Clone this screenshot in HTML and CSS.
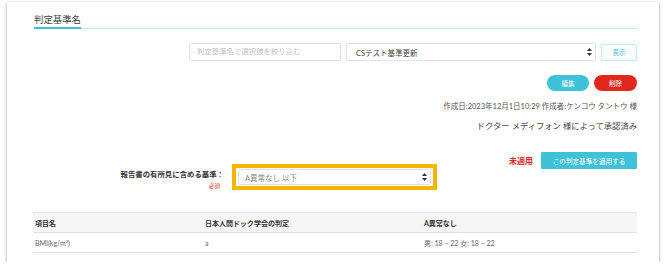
FILE: index.html
```html
<!DOCTYPE html>
<html lang="ja">
<head>
    <meta charset="UTF-8">
    <meta name="viewport" content="width=device-width, initial-scale=1.0">
    <title>判定基準名</title>
    <link rel="stylesheet" href="styles.css">
</head>
<body>
    <div class="card">
        <h2 class="section-title"><span>判定基準名</span></h2>

        <div class="filter-row">
            <div class="filter-input">判定基準名で選択肢を絞り込む</div>
            <div class="select-box wide">
                <span class="select-text">CSテスト基準更新</span>
                <svg class="arrows" width="5" height="8" viewBox="0 0 5 8"><path d="M2.5 0L5 3H0z M2.5 8L0 5h5z" fill="#333"/></svg>
            </div>
            <button class="outline-button">表示</button>
        </div>

        <div class="action-row">
            <button class="pill-button edit">編集</button>
            <button class="pill-button delete">削除</button>
        </div>

        <p class="meta">作成日:2023年12月1日10:29 作成者:ケンコウ タントウ 様</p>
        <p class="approved">ドクター メディフォン 様によって承認済み</p>

        <div class="criteria-row">
            <div class="criteria-left">
                <div class="criteria-label">
                    <span class="label-text">報告書の有所見に含める基準：</span>
                    <span class="required">必須</span>
                </div>
                <div class="highlight-frame">
                    <div class="select-box inner">
                        <span class="select-text muted">A異常なし 以下</span>
                        <svg class="arrows" width="5" height="8" viewBox="0 0 5 8"><path d="M2.5 0L5 3H0z M2.5 8L0 5h5z" fill="#333"/></svg>
                    </div>
                </div>
            </div>
            <div class="apply-block">
                <span class="status">未適用</span>
                <button class="apply-button">この判定基準を適用する</button>
            </div>
        </div>

        <table class="criteria-table">
            <thead>
                <tr>
                    <th class="col-name">項目名</th>
                    <th class="col-judge">日本人間ドック学会の判定</th>
                    <th>A異常なし</th>
                </tr>
            </thead>
            <tbody>
                <tr>
                    <td>BMI(kg/m²)</td>
                    <td>a</td>
                    <td>男: 18 ~ 22 女: 18 ~ 22</td>
                </tr>
            </tbody>
        </table>
    </div>
</body>
</html>
```

FILE: styles.css
```css
:root {
    --teal: #3fc1d9;
    --teal-light: #b8ebf3;
    --red: #e0281d;
    --yellow: #f6b500;
    --text-color: #555;
    --border-color: #e3e3e3;
}

* {
    margin: 0;
    padding: 0;
    box-sizing: border-box;
}

body {
    font-family: Lato, "Noto Sans CJK JP", sans-serif;
    background-color: #fff;
    color: var(--text-color);
}

.card {
    width: 652px;
    height: 260px;
    margin: 2px 0 0 7px;
    padding: 9px 22px 12px 27px;
    background-color: #fff;
    box-shadow: 0 1px 3px rgba(0, 0, 0, 0.4);
}

.section-title {
    font-size: 9.4px;
    font-weight: 400;
    line-height: 14px;
    color: #444;
    border-bottom: 1px solid var(--teal-light);
    padding-bottom: 1px;
    margin-top: 2px;
}

.section-title span {
    display: inline-block;
    position: relative;
}

.section-title span::after {
    content: "";
    position: absolute;
    left: 0;
    right: 0;
    bottom: -2px;
    height: 2px;
    background-color: var(--teal);
}

.filter-row {
    display: flex;
    justify-content: flex-end;
    align-items: center;
    gap: 5px;
    margin-top: 14px;
    height: 18px;
}

.filter-input {
    width: 152px;
    height: 18px;
    border: 1px solid #e2e2e2;
    border-radius: 2px;
    font-size: 7.4px;
    line-height: 16px;
    padding-left: 7px;
    color: #c4c4c4;
}

.select-box {
    display: flex;
    align-items: center;
    justify-content: space-between;
    border: 1px solid #e2e2e2;
    border-radius: 2px;
    background-color: #fff;
    padding: 0 3px 0 9px;
}

.select-box.wide {
    width: 250px;
    height: 18px;
}

.select-text {
    font-size: 7.5px;
    color: #444;
}

.select-text.muted {
    color: #888;
}

.outline-button {
    width: 36px;
    height: 17px;
    border: 1px solid var(--teal-light);
    border-radius: 2px;
    background-color: #fff;
    color: var(--teal);
    font-family: inherit;
    font-size: 6.5px;
}

.action-row {
    display: flex;
    justify-content: flex-end;
    gap: 5px;
    margin-top: 14px;
}

.pill-button {
    height: 16px;
    border: none;
    border-radius: 8px;
    color: #fff;
    font-family: inherit;
    font-size: 6.5px;
}

.pill-button.edit {
    width: 42px;
    background-color: var(--teal);
}

.pill-button.delete {
    width: 43px;
    background-color: var(--red);
}

.meta {
    margin-top: 11px;
    text-align: right;
    font-size: 7.5px;
    line-height: 10px;
    color: #555;
}

.approved {
    margin-top: 8px;
    text-align: right;
    font-size: 8.3px;
    line-height: 12px;
    color: #444;
}

.criteria-row {
    display: flex;
    justify-content: space-between;
    align-items: flex-start;
    margin-top: 20px;
}

.criteria-left {
    display: flex;
    align-items: flex-start;
    gap: 8px;
    padding-top: 12px;
}

.criteria-label {
    width: 190px;
    display: flex;
    flex-direction: column;
    align-items: flex-end;
    padding-top: 6px;
}

.label-text {
    font-size: 7.4px;
    line-height: 10px;
    font-weight: 700;
    color: #333;
}

.required {
    font-size: 5.5px;
    line-height: 7px;
    margin-top: 3px;
    padding-right: 4px;
    color: var(--red);
}

.highlight-frame {
    width: 205px;
    height: 26px;
    border: 4px solid var(--yellow);
    padding: 1px 2px;
}

.select-box.inner {
    height: 16px;
    padding: 0 3px 0 6px;
}

.apply-block {
    display: flex;
    align-items: center;
    gap: 8px;
}

.status {
    font-size: 8px;
    font-weight: 700;
    color: var(--red);
}

.apply-button {
    width: 96px;
    height: 17px;
    border: none;
    border-radius: 1px;
    background-color: var(--teal);
    color: #fff;
    font-family: inherit;
    font-size: 6.6px;
}

.criteria-table {
    width: 604px;
    margin-top: 22px;
    margin-left: -1px;
    border-collapse: collapse;
    font-size: 7px;
}

.criteria-table th,
.criteria-table td {
    text-align: left;
    height: 20px;
    padding: 0 2px;
    border-top: 1px solid var(--border-color);
    border-bottom: 1px solid var(--border-color);
}

.criteria-table th {
    background-color: #f6f6f6;
    font-weight: 700;
    color: #333;
}

.criteria-table td {
    color: #666;
}

.col-name {
    width: 170px;
}

.col-judge {
    width: 219px;
}
```
